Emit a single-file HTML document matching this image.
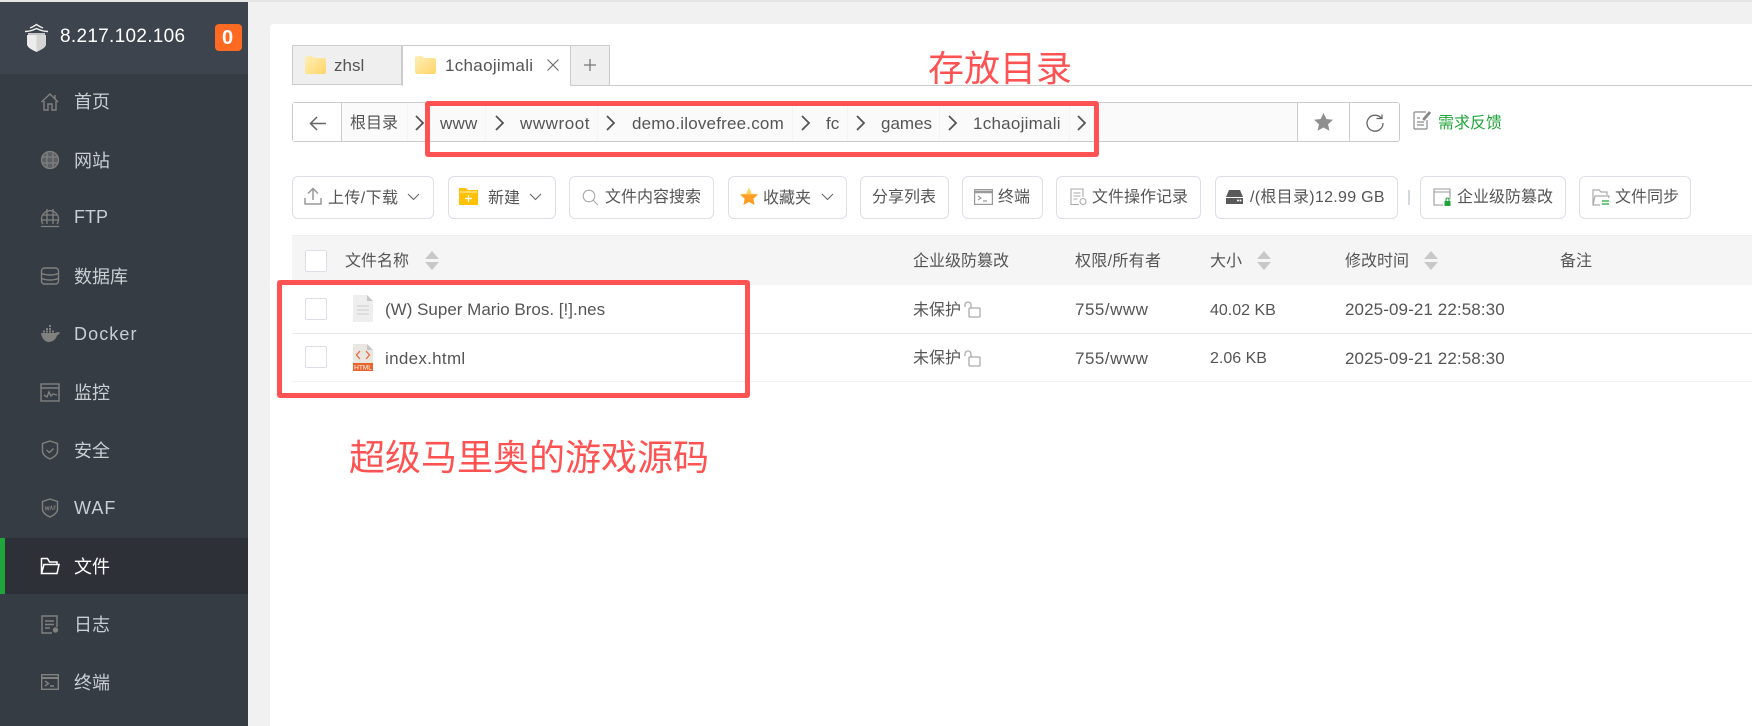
<!DOCTYPE html>
<html lang="zh"><head><meta charset="utf-8"><title>文件</title>
<style>
html,body{margin:0;padding:0;width:1752px;height:726px;overflow:hidden;background:#f1f1f1}
body{position:relative;font-family:"Liberation Sans","Noto Sans CJK SC",sans-serif;color:#555}
div,span,svg{position:absolute}
.t{white-space:nowrap;line-height:1;font-size:16px;color:#555}
.l{font-size:17px}
.n{white-space:nowrap;line-height:1;font-size:18px;color:#c9ced3;left:74px}
.btn{top:176px;height:41px;background:#fff;border:1px solid #dcdfe6;border-radius:6px;box-sizing:content-box}
.ck{left:305px;width:20px;height:20px;background:#fff;border:1px solid #dcdfe6;border-radius:2px}
.cell{top:103px;height:38px;border-right:1px solid #f4f4f4}
</style></head><body>
<div style="left:0;top:0;width:1752px;height:2px;background:#e5e5e5"></div>

<!-- sidebar -->
<div style="left:0;top:2px;width:248px;height:724px;background:#363c43"></div>
<div style="left:0;top:2px;width:248px;height:72px;background:#3d444d"></div>
<div style="left:0;top:538px;width:248px;height:56px;background:#2d3037"></div>
<div style="left:0;top:538px;width:5px;height:56px;background:#20a53a"></div>

<svg style="left:23px;top:23px" width="27" height="29" viewBox="0 0 27 29"><path d="M7 5c3-1 4-2 6.500-3.500C16 3 17 4 20 5M2 8.500c4 0 7.500-1 11.500-3 4 2 7.500 3 11.500 3M5 11h17" stroke="#eee" stroke-width="1.400" fill="none"/><path d="M4 12h19v9c0 4-6 6-9.500 8C10 27 4 25 4 21z" fill="#ececec"/><path d="M13.500 12H23v9c0 4-6 6-9.500 8z" fill="#d4d4d4"/></svg>
<span class="t" style="left:60px;top:27px;font-size:19px;color:#fff;letter-spacing:.3px">8.217.102.106</span>
<div style="left:215px;top:24px;width:27px;height:27px;background:#ff6a22;border-radius:4px"></div>
<span class="t" style="left:222px;top:28px;font-size:20px;font-weight:bold;color:#fff">0</span>

<span class="n" style="top:93px">首页</span>
<span class="n" style="top:152px">网站</span>
<span class="n" style="top:208px">FTP</span>
<span class="n" style="top:268px">数据库</span>
<span class="n" style="top:325px;letter-spacing:1.1px">Docker</span>
<span class="n" style="top:384px">监控</span>
<span class="n" style="top:442px">安全</span>
<span class="n" style="top:499px;letter-spacing:1px">WAF</span>
<span class="n" style="top:558px;color:#fff">文件</span>
<span class="n" style="top:616px">日志</span>
<span class="n" style="top:674px">终端</span>

<svg style="left:40px;top:92px" width="20" height="20" viewBox="0 0 20 20" fill="none" stroke="#80807f" stroke-width="1.4"><path d="M1.5 10L10 2l8 8M4 9v9h4v-6h4v6h4V9M15 3v4"/></svg>
<svg style="left:40px;top:150px" width="20" height="20" viewBox="0 0 20 20" fill="none" stroke="#80807f" stroke-width="1.3"><circle cx="10" cy="10" r="8.5" fill="#5b6066"/><path d="M2 7h16M2 13h16M7 2v16M13 2v16"/></svg>
<svg style="left:40px;top:207px" width="20" height="21" viewBox="0 0 20 21" fill="none" stroke="#80807f" stroke-width="1.3"><path d="M3 17a8.500 8.500 0 1 1 14 0M2 8h16M2 13h16M7 2v15M13 2v15M1 19.500h18"/></svg>
<svg style="left:40px;top:266px" width="20" height="20" viewBox="0 0 20 20" fill="none" stroke="#80807f" stroke-width="1.4"><rect x="1.500" y="2" width="17" height="16" rx="3"/><path d="M2 7.500c4 2 12 2 16 0M2 12.500c4 2 12 2 16 0"/></svg>
<svg style="left:40px;top:325px" width="20" height="18" viewBox="0 0 20 18"><path d="M1 8h14c1 0 1.500-1 3-1l2 .5c-1 2-2 2.500-3 3-1 4-5 6.500-8 6.500-4 0-7-3-8-9z" fill="#80807f"/><path d="M6 3h2v2H6zM9 3h2v2H9zM9 0h2v2H9zM6 5.500h2v2H6zM9 5.500h2v2H9zM12 5.500h2v2h-2zM3 5.500h2v2H3z" fill="#80807f"/></svg>
<svg style="left:40px;top:382px" width="20" height="20" viewBox="0 0 20 20" fill="none" stroke="#80807f" stroke-width="1.4"><rect x="1" y="2" width="18" height="17"/><path d="M1 6h18M4 13l3 2 2-5 2 4 2-2 4 1"/></svg>
<svg style="left:41px;top:440px" width="18" height="20" viewBox="0 0 18 20" fill="none" stroke="#80807f" stroke-width="1.4"><path d="M9 1l7.500 2.500V11c0 3-3 6-7.500 8-4.500-2-7.500-5-7.500-8V3.500z"/><path d="M5.500 10l3 2.500 4-4"/></svg>
<svg style="left:41px;top:498px" width="18" height="20" viewBox="0 0 18 20" fill="none" stroke="#80807f" stroke-width="1.400"><path d="M9 1l7.500 2.500V11c0 3-3 6-7.500 8-4.500-2-7.500-5-7.500-8V3.500z"/><path d="M4 8l1 4 1.200-3 1 3 1-4M9 12l1.300-4 1.300 4M13 12V8h2M13 10h1.500" stroke-width=".8"/></svg>
<svg style="left:40px;top:557px" width="20" height="18" viewBox="0 0 20 18" fill="none" stroke="#fff" stroke-width="1.500"><path d="M1.500 16.500V1.500h6l2 3.500h7.500v2M1.500 16.500l2.500-9h15l-2 9z"/></svg>
<svg style="left:41px;top:615px" width="18" height="19" viewBox="0 0 18 19" fill="none" stroke="#80807f" stroke-width="1.400"><path d="M11 18H1V1h15v11M4 6h9M4 9.500h9M4 13h5"/><circle cx="14.500" cy="15" r="2" fill="#80807f"/></svg>
<svg style="left:41px;top:674px" width="18" height="16" viewBox="0 0 18 16" fill="none" stroke="#80807f" stroke-width="1.400"><rect x=".7" y=".7" width="16.600" height="14.600"/><path d="M1 4h16" stroke-width="2"/><path d="M4 7l3.500 2.500L4 12M9 12h4"/></svg>

<!-- card -->
<div style="left:270px;top:24px;width:1482px;height:702px;background:#fff;border-top-left-radius:4px"></div>

<!-- tabs -->
<div style="left:610px;top:85px;width:1142px;height:1px;background:#ccc"></div>
<div style="left:292px;top:45px;width:110px;height:40px;background:#efefef;border:1px solid #ccc;box-sizing:border-box"></div>
<div style="left:402px;top:45px;width:168px;height:41px;background:#fff;border-top:1px solid #ccc;border-left:1px solid #ccc;box-sizing:border-box"></div>
<div style="left:570px;top:45px;width:40px;height:41px;background:#efefef;border:1px solid #ccc;box-sizing:border-box"></div>
<svg style="left:305px;top:56px" width="21" height="18" viewBox="0 0 21 18"><defs><linearGradient id="fg" x1="0" y1="0" x2="1" y2="1"><stop offset="0" stop-color="#fff0b8"/><stop offset="1" stop-color="#ffd469"/></linearGradient></defs><path d="M0 2c0-1 1-2 2-2h5l2 2h10c1 0 2 1 2 2v12c0 1-1 2-2 2H2c-1 0-2-1-2-2z" fill="url(#fg)"/></svg>
<span class="t" style="left:334px;top:57px;font-size:17px">zhsl</span>
<svg style="left:415px;top:56px" width="21" height="18" viewBox="0 0 21 18"><path d="M0 2c0-1 1-2 2-2h5l2 2h10c1 0 2 1 2 2v12c0 1-1 2-2 2H2c-1 0-2-1-2-2z" fill="url(#fg)"/></svg>
<span class="t" style="left:445px;top:57px;font-size:17px;letter-spacing:.3px">1chaojimali</span>
<svg style="left:547px;top:59px" width="12" height="12" viewBox="0 0 12 12" stroke="#666" stroke-width="1.100"><path d="M.5.500l11 11M11.500.500l-11 11"/></svg>
<svg style="left:583px;top:58px" width="14" height="14" viewBox="0 0 14 14" stroke="#777" stroke-width="1.300"><path d="M7 1v12M1 7h12"/></svg>

<!-- path bar -->
<div style="left:292px;top:102px;width:1108px;height:40px;background:#fafafa;border:1px solid #ccc;border-radius:3px;box-sizing:border-box"></div>
<div style="left:293px;top:103px;width:48px;height:38px;background:#fff;border-right:1px solid #ccc"></div>
<div style="left:1297px;top:103px;width:101px;height:38px;background:#fff;border-left:1px solid #ccc;border-radius:0 2px 2px 0"></div>
<div style="left:1349px;top:103px;width:1px;height:38px;background:#ccc"></div>
<div class="cell" style="left:350px;width:57px"></div>
<div class="cell" style="left:426px;width:59px"></div>
<div class="cell" style="left:510px;width:87px"></div>
<div class="cell" style="left:622px;width:170px"></div>
<div class="cell" style="left:817px;width:30px"></div>
<div class="cell" style="left:872px;width:67px"></div>
<div class="cell" style="left:963px;width:106px"></div>
<svg style="left:309px;top:116px" width="17" height="15" viewBox="0 0 17 15" fill="none" stroke="#666" stroke-width="1.500"><path d="M17 7.500H1.500M8 1L1.500 7.500 8 14"/></svg>
<span class="t" style="left:350px;top:116px">根目录</span>
<span class="t l" style="left:440px;top:115px;letter-spacing:.2px">www</span>
<span class="t l" style="left:520px;top:115px;letter-spacing:.55px">wwwroot</span>
<span class="t l" style="left:632px;top:115px;letter-spacing:.2px">demo.ilovefree.com</span>
<span class="t l" style="left:826px;top:115px">fc</span>
<span class="t l" style="left:881px;top:115px">games</span>
<span class="t l" style="left:973px;top:115px;letter-spacing:.25px">1chaojimali</span>
<svg style="left:0;top:0" width="1200" height="160" fill="none" stroke="#555" stroke-width="1.800"><path d="M416 116l7 7-7 7M496 116l7 7-7 7M607 116l7 7-7 7M802 116l7 7-7 7M857 116l7 7-7 7M949 116l7 7-7 7M1078 116l7 7-7 7"/></svg>
<svg style="left:1314px;top:113px" width="19" height="18" viewBox="0 0 19 18"><path d="M9.500 0l2.900 6 6.600.8-4.900 4.500 1.300 6.500-5.900-3.300-5.900 3.300 1.300-6.500L0 6.800 6.600 6z" fill="#8f8f8f"/></svg>
<svg style="left:1366px;top:114px" width="18" height="18" viewBox="0 0 18 18" fill="none" stroke="#666" stroke-width="1.300"><path d="M15.500 4.500A8 8 0 1 0 17 9"/><path d="M10.500 4.500h5.500V.5" stroke-width="1.300"/></svg>
<svg style="left:1413px;top:110px" width="18" height="20" viewBox="0 0 18 20" fill="none" stroke="#888" stroke-width="1.200"><path d="M13 2H2a1 1 0 0 0-1 1v15a1 1 0 0 0 1 1h11a1 1 0 0 0 1-1v-8M4 8h3M4 12h7M4 15h7"/><path d="M10 9l6-7 1.300 1-6 7z" fill="#888"/></svg>
<span class="t" style="left:1438px;top:116px;color:#20a53a">需求反馈</span>

<!-- annotations -->
<span class="t" style="left:928px;top:51px;font-size:36px;color:#ff5252">存放目录</span>

<!-- toolbar -->
<div class="btn" style="left:292px;width:140px"></div>
<div class="btn" style="left:448px;width:106px"></div>
<div class="btn" style="left:569px;width:143px"></div>
<div class="btn" style="left:728px;width:117px"></div>
<div class="btn" style="left:860px;width:87px"></div>
<div class="btn" style="left:962px;width:79px"></div>
<div class="btn" style="left:1056px;width:143px"></div>
<div class="btn" style="left:1215px;width:181px"></div>
<div style="left:1408px;top:190px;width:2px;height:15px;background:#d5d8dc"></div>
<div class="btn" style="left:1420px;width:144px"></div>
<div class="btn" style="left:1579px;width:110px"></div>

<svg style="left:304px;top:187px" width="18" height="18" viewBox="0 0 18 18" fill="none" stroke="#999" stroke-width="1.500"><path d="M9 13V2M4 6.500L9 1.500l5 5M1 11v6h16v-6"/></svg>
<span class="t" style="left:328px;top:191px;letter-spacing:.4px">上传/下载</span>
<svg style="left:407px;top:193px" width="13" height="8" viewBox="0 0 13 8" fill="none" stroke="#666" stroke-width="1.100"><path d="M1 1l5.500 5.500L12 1"/></svg>
<svg style="left:459px;top:188px" width="19" height="17" viewBox="0 0 19 17"><path d="M0 0h7l2 2h10v15H0z" fill="#ffc107"/><path d="M1 4h17" stroke="#fff3c4" stroke-width="1"/><path d="M9.500 7v7M6 10.500h7" stroke="#fff" stroke-width="1.200"/></svg>
<span class="t" style="left:488px;top:191px">新建</span>
<svg style="left:529px;top:193px" width="13" height="8" viewBox="0 0 13 8" fill="none" stroke="#666" stroke-width="1.100"><path d="M1 1l5.500 5.500L12 1"/></svg>
<svg style="left:582px;top:189px" width="17" height="17" viewBox="0 0 17 17" fill="none" stroke="#aaa" stroke-width="1.100"><circle cx="7" cy="7" r="5.800"/><path d="M11 11l5 5"/></svg>
<span class="t" style="left:605px;top:190px">文件内容搜索</span>
<svg style="left:740px;top:188px" width="18" height="17" viewBox="0 0 18 17"><path d="M9 0l2.700 5.700 6.300.8-4.600 4.300 1.200 6.200L9 14l-5.600 3 1.200-6.200L0 6.500l6.300-.8z" fill="#ff9d26"/><path d="M9 0l2.700 5.700 6.300.8H0l6.300-.8z" fill="#ffd15c"/></svg>
<span class="t" style="left:763px;top:191px">收藏夹</span>
<svg style="left:821px;top:193px" width="13" height="8" viewBox="0 0 13 8" fill="none" stroke="#666" stroke-width="1.100"><path d="M1 1l5.500 5.500L12 1"/></svg>
<span class="t" style="left:872px;top:190px">分享列表</span>
<svg style="left:974px;top:189px" width="19" height="16" viewBox="0 0 19 16" fill="none" stroke="#999" stroke-width="1.200"><rect x=".6" y=".6" width="17.800" height="14.800"/><path d="M1 3h17" stroke-width="2.500"/><path d="M4 7l3 2-3 2M9 12h4"/></svg>
<span class="t" style="left:998px;top:190px">终端</span>
<svg style="left:1070px;top:188px" width="17" height="18" viewBox="0 0 17 18" fill="none" stroke="#aaa" stroke-width="1.100"><path d="M9 16.500H1V1h12v8M3.500 5h7M3.500 8h7M3.500 11h4"/><circle cx="13" cy="13.500" r="3"/></svg>
<span class="t" style="left:1092px;top:190px">文件操作记录</span>
<svg style="left:1226px;top:190px" width="17" height="14" viewBox="0 0 17 14"><path d="M3 0h11l3 7v7H0V7z" fill="#5a5a5a"/><path d="M0 7.500h17" stroke="#fff" stroke-width="1"/><circle cx="12" cy="10.500" r="1" fill="#fff"/><circle cx="14.500" cy="10.500" r="1" fill="#fff"/></svg>
<span class="t" style="left:1250px;top:190px;letter-spacing:.3px">/(根目录)12.99 GB</span>
<svg style="left:1433px;top:188px" width="18" height="19" viewBox="0 0 18 19" fill="none" stroke="#999" stroke-width="1.100"><path d="M10 17H1V1h16v10M1 4h16"/><rect x="11.500" y="13" width="6" height="5" fill="#20a53a" stroke="none"/><path d="M13 13v-1.500a1.500 1.500 0 0 1 3 0V13" stroke="#20a53a"/></svg>
<span class="t" style="left:1457px;top:190px">企业级防篡改</span>
<svg style="left:1592px;top:189px" width="18" height="17" viewBox="0 0 18 17" fill="none" stroke="#aaa" stroke-width="1.200"><path d="M8 16H1V1h6l2 2h6v3M1 16l2-9h14l-.5 2"/><path d="M10 12h7M10 15h7" stroke="#20a53a"/></svg>
<span class="t" style="left:1615px;top:190px">文件同步</span>

<!-- table -->
<div style="left:292px;top:235px;width:1460px;height:50px;background:#f5f5f5;border-top:1px solid #eee;box-sizing:border-box"></div>
<div style="left:292px;top:333px;width:1460px;height:1px;background:#eaeaea"></div>
<div style="left:292px;top:381px;width:1460px;height:1px;background:#f2f2f2"></div>
<div class="ck" style="top:250px"></div>
<div class="ck" style="top:298px"></div>
<div class="ck" style="top:346px"></div>
<span class="t" style="left:345px;top:254px">文件名称</span>
<span class="t" style="left:913px;top:254px">企业级防篡改</span>
<span class="t" style="left:1075px;top:254px;letter-spacing:.3px">权限/所有者</span>
<span class="t" style="left:1210px;top:254px">大小</span>
<span class="t" style="left:1345px;top:254px">修改时间</span>
<span class="t" style="left:1560px;top:254px">备注</span>
<svg style="left:0;top:0" width="1752" height="300" fill="#c8c8c8"><path d="M425 259l7-8 7 8zM425 262l7 8 7-8zM1257 259l7-8 7 8zM1257 262l7 8 7-8zM1424 259l7-8 7 8zM1424 262l7 8 7-8z"/></svg>

<svg style="left:353px;top:295px" width="20" height="27" viewBox="0 0 20 27"><path d="M0 0h14l6 6v21H0z" fill="#eee"/><path d="M14 0l6 6h-6z" fill="#c6c6c6"/><path d="M4 11h12M4 15h12M4 19h12" stroke="#ccc" stroke-width="1"/></svg>
<span class="t l" style="left:385px;top:301px">(W) Super Mario Bros. [!].nes</span>
<svg style="left:353px;top:344px" width="20" height="27" viewBox="0 0 20 27"><path d="M0 0h14l6 6v21H0z" fill="#e9e7e2"/><path d="M14 0l6 6h-6z" fill="#c6c6c6"/><rect y="19" width="20" height="8" fill="#e9652d"/><path d="M7 7l-3.500 4L7 15M13 7l3.500 4L13 15" fill="none" stroke="#ec6a35" stroke-width="1.300"/><text x="10" y="25.700" font-size="6.500" fill="#fff" text-anchor="middle" font-family="Liberation Sans">HTML</text></svg>
<span class="t l" style="left:385px;top:350px;letter-spacing:.3px">index.html</span>

<span class="t" style="left:913px;top:303px">未保护</span>
<span class="t" style="left:913px;top:351px">未保护</span>
<svg style="left:964px;top:301px" width="17" height="17" viewBox="0 0 17 17" fill="none" stroke="#aaa" stroke-width="1.300"><rect x="5" y="7" width="11" height="9" rx="1"/><path d="M1 6V4a3 3 0 0 1 6 0v3"/></svg>
<svg style="left:964px;top:350px" width="17" height="17" viewBox="0 0 17 17" fill="none" stroke="#aaa" stroke-width="1.300"><rect x="5" y="7" width="11" height="9" rx="1"/><path d="M1 6V4a3 3 0 0 1 6 0v3"/></svg>
<span class="t l" style="left:1075px;top:301px;letter-spacing:.5px">755/www</span>
<span class="t" style="left:1210px;top:303px">40.02 KB</span>
<span class="t l" style="left:1075px;top:350px;letter-spacing:.5px">755/www</span>
<span class="t" style="left:1210px;top:351px">2.06 KB</span>
<span class="t l" style="left:1345px;top:301px;letter-spacing:.1px">2025-09-21 22:58:30</span>
<span class="t l" style="left:1345px;top:350px;letter-spacing:.1px">2025-09-21 22:58:30</span>

<!-- red boxes -->
<div style="left:425px;top:101px;width:674px;height:56px;border:5px solid #ff5252;border-radius:3px;box-sizing:border-box"></div>
<div style="left:277px;top:280px;width:473px;height:118px;border:5px solid #ff5252;border-radius:3px;box-sizing:border-box"></div>
<span class="t" style="left:349px;top:440px;font-size:36px;color:#ff5252">超级马里奥的游戏源码</span>
</body></html>
